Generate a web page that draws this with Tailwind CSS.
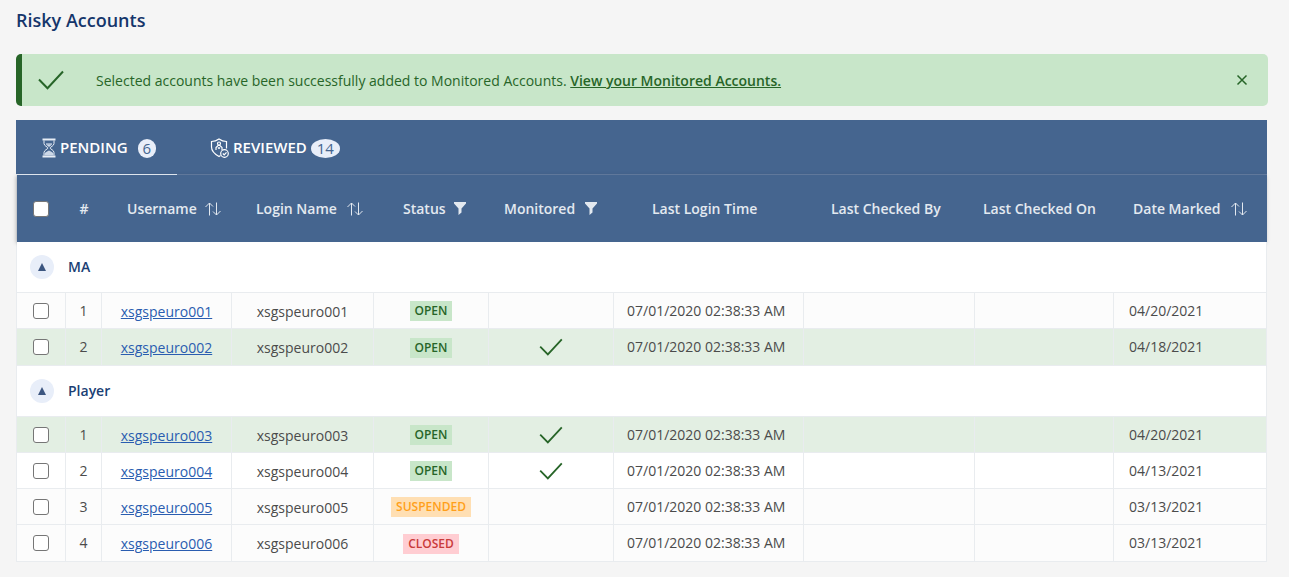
<!DOCTYPE html>
<html lang="en">
<head>
<meta charset="utf-8">
<meta name="viewport" content="width=device-width, initial-scale=1">
<title>Risky Accounts</title>
<script src="https://cdn.jsdelivr.net/npm/@tailwindcss/browser@4"></script>
</head>
<body class="bg-[#f5f5f5] font-['Segoe_UI','Open_Sans','Noto_Sans',sans-serif] text-sm text-[#4b4b4b]">
<svg class="hidden" aria-hidden="true">
  <symbol id="check" viewBox="0 0 26 20"><path d="M1 9.500L9.500 18.200L25 1.500" fill="none" stroke="currentColor" stroke-width="2"/></symbol>
  <symbol id="sort" viewBox="0 0 16 14"><path d="M4.500 13.500V1M.5 5L4.500 1L8 4.500M11.500 .5V13M8 9.500L11.500 13L15.500 9" fill="none" stroke="currentColor" stroke-width="1"/></symbol>
  <symbol id="filter" viewBox="0 0 12 13"><path d="M0 0H12V1.500L7.500 6.500V10.500L4.500 13V6.500L0 1.500Z" fill="currentColor"/></symbol>
</svg>
<main class="pl-4 pr-[21px] pt-2">
  <h1 class="text-lg leading-6 font-semibold text-[#15366b]">Risky Accounts</h1>

  <div role="status" class="mt-[22px] flex h-[52px] items-center rounded-[5px] border-l-6 border-[#276528] bg-[#c8e6c9] pl-4 pr-4 text-[#276528]">
    <svg class="h-5 w-[26px] shrink-0"><use href="#check"/></svg>
    <p class="ml-8 grow pt-0.5">Selected accounts have been successfully added to Monitored Accounts. <a href="#" class="font-semibold underline">View your Monitored Accounts.</a></p>
    <button type="button" aria-label="Close" class="p-1"><svg class="size-3" viewBox="0 0 12 12"><path d="M1.500 1.500L10.500 10.500M10.500 1.500L1.500 10.500" stroke="currentColor" stroke-width="1.500"/></svg></button>
  </div>

  <section class="mt-3.5 mr-px">
    <div role="tablist" class="flex h-[55px] border-b border-[#6780a5] bg-[#45658f] text-[15px] text-white">
      <button type="button" role="tab" aria-selected="true" class="-mb-px flex w-[161px] items-center border-b border-[#dde4ed] pt-0.5 pl-[26px] font-semibold">
        <svg class="h-5 w-3.5" viewBox="0 0 14 20" fill="none" stroke="#e8eef6"><path d="M.5 1.500H13.500M.5 18.500H13.500" stroke-width="2"/><path d="M2 2.500V5.500C2 8 6 9 6 10S2 12 2 14.500V17.500M12 2.500V5.500C12 8 8 9 8 10S12 12 12 14.500V17.500M4 6H10"/><path d="M2.500 17.500V16C3 14 5 13.500 7 12.500C9 13.500 11 14 11.500 16V17.500ZM4 6.500L7 9L10 6.500Z" fill="#cbd7e7" stroke="none"/></svg>
        <span class="ml-1">PENDING</span>
        <span class="ml-2.5 rounded-full bg-[#e8eef9] px-[5px] leading-[19px] font-normal text-[#45658f]">6</span>
      </button>
      <button type="button" role="tab" aria-selected="false" class="ml-[33px] flex items-center pt-0.5 font-semibold">
        <svg class="h-5 w-[19px]" viewBox="0 0 19 20" fill="none" stroke="#fff" stroke-width="1.200"><path d="M10.500 17.500L9 18.500C4.500 16 1.500 13 1.500 9V3.500C4.500 3.500 7 2.500 9 1C11 2.500 13.500 3.500 16.500 3.500V10.500"/><circle cx="9" cy="5.500" r="1.500"/><path d="M6 12V9.500L8 7.500H10L12 9.500V12M8 9.500L9 10.500L10 9.500"/><circle cx="14.500" cy="15.500" r="3.800"/><path d="M12.800 15.500L14.200 16.800L16.500 14.300"/></svg>
        <span class="ml-1">REVIEWED</span>
        <span class="ml-1 rounded-[50%] bg-[#e8eef9] px-1.5 leading-[19px] font-normal text-[#45658f]">14</span>
      </button>
    </div>

    <table class="w-full table-fixed border-separate border-spacing-0 border-l border-[#e9ecef]">
      <colgroup>
        <col class="w-[49px]"><col class="w-9"><col class="w-[130px]"><col class="w-[142px]"><col class="w-[115px]"><col class="w-[125px]"><col class="w-[190px]"><col class="w-[171px]"><col class="w-[139px]"><col class="w-[153px]">
      </colgroup>
      <thead class="bg-[#45658f] text-left whitespace-nowrap text-[#e3e9f0] shadow-[-1px_1px_4px_rgba(0,0,0,0.25)]">
        <tr class="h-[67px] *:font-semibold">
          <th scope="col" class="pr-px"><input type="checkbox" aria-label="Select all" class="mx-auto block size-4 appearance-none rounded-[3px] border border-[#767676] bg-white checked:bg-[#2a5db0]"></th>
          <th scope="col" class="text-center">#</th>
          <th scope="col" class="pl-[25px]"><button type="button" class="flex items-center gap-2">Username<svg class="h-3.5 w-4"><use href="#sort"/></svg></button></th>
          <th scope="col" class="pl-6"><button type="button" class="flex items-center gap-2.5">Login Name<svg class="h-3.5 w-4"><use href="#sort"/></svg></button></th>
          <th scope="col" class="pl-[29px]"><button type="button" class="flex items-center gap-2">Status<svg class="h-[13px] w-3"><use href="#filter"/></svg></button></th>
          <th scope="col" class="pl-[15px]"><button type="button" class="flex items-center gap-2.5">Monitored<svg class="h-[13px] w-3"><use href="#filter"/></svg></button></th>
          <th scope="col" class="pl-[38px]">Last Login Time</th>
          <th scope="col" class="pl-[27px]">Last Checked By</th>
          <th scope="col" class="pl-2">Last Checked On</th>
          <th scope="col" class="pl-[19px]"><button type="button" class="flex items-center gap-2.5">Date Marked<svg class="h-3.5 w-4"><use href="#sort"/></svg></button></th>
        </tr>
      </thead>

      <tbody class="*:*:border-r *:*:border-b *:*:border-[#e9ecef]">
        <tr class="h-[51px] bg-white"><th colspan="10" scope="rowgroup"><div class="flex items-center pl-[13px] font-semibold text-[#1b3f75]"><button type="button" aria-label="Collapse MA" class="mr-3.5 flex size-6 items-center justify-center rounded-full bg-[#e8eef9]"><svg class="size-2" viewBox="0 0 8 8"><path d="M4 0L8 8H0Z" fill="#3c5680"/></svg></button>MA</div></th></tr>
        <tr class="h-9 bg-[#fcfcfc]">
          <td><input type="checkbox" aria-label="Select xsgspeuro001" class="mx-auto block size-4 appearance-none rounded-[3px] border border-[#767676] bg-white checked:bg-[#2a5db0]"></td>
          <td class="text-center">1</td><td class="pt-0.5 text-center"><a href="#" class="text-[#2a5db0] underline">xsgspeuro001</a></td><td class="pt-0.5 text-center">xsgspeuro001</td>
          <td class="text-center"><span class="inline-block bg-[#c8e6c9] px-[5px] text-xs leading-5 font-semibold text-[#276528]">OPEN</span></td><td></td>
          <td class="pl-[13px]">07/01/2020 02:38:33 AM</td><td></td><td></td><td class="pl-[15px]">04/20/2021</td>
        </tr>
        <tr class="h-[37px] bg-[#e3efe3]">
          <td><input type="checkbox" aria-label="Select xsgspeuro002" class="mx-auto block size-4 appearance-none rounded-[3px] border border-[#767676] bg-white checked:bg-[#2a5db0]"></td>
          <td class="text-center">2</td><td class="pt-0.5 text-center"><a href="#" class="text-[#2a5db0] underline">xsgspeuro002</a></td><td class="pt-0.5 text-center">xsgspeuro002</td>
          <td class="text-center"><span class="inline-block bg-[#c8e6c9] px-[5px] text-xs leading-5 font-semibold text-[#276528]">OPEN</span></td><td><svg class="mx-auto h-[18px] w-6 text-[#276528]" role="img" aria-label="Monitored"><use href="#check"/></svg></td>
          <td class="pl-[13px]">07/01/2020 02:38:33 AM</td><td></td><td></td><td class="pl-[15px]">04/18/2021</td>
        </tr>
      </tbody>

      <tbody class="*:*:border-r *:*:border-b *:*:border-[#e9ecef]">
        <tr class="h-[51px] bg-white"><th colspan="10" scope="rowgroup"><div class="flex items-center pl-[13px] font-semibold text-[#1b3f75]"><button type="button" aria-label="Collapse Player" class="mr-3.5 flex size-6 items-center justify-center rounded-full bg-[#e8eef9]"><svg class="size-2" viewBox="0 0 8 8"><path d="M4 0L8 8H0Z" fill="#3c5680"/></svg></button>Player</div></th></tr>
        <tr class="h-9 bg-[#e3efe3]">
          <td><input type="checkbox" aria-label="Select xsgspeuro003" class="mx-auto block size-4 appearance-none rounded-[3px] border border-[#767676] bg-white checked:bg-[#2a5db0]"></td>
          <td class="text-center">1</td><td class="pt-0.5 text-center"><a href="#" class="text-[#2a5db0] underline">xsgspeuro003</a></td><td class="pt-0.5 text-center">xsgspeuro003</td>
          <td class="text-center"><span class="inline-block bg-[#c8e6c9] px-[5px] text-xs leading-5 font-semibold text-[#276528]">OPEN</span></td><td><svg class="mx-auto h-[18px] w-6 text-[#276528]" role="img" aria-label="Monitored"><use href="#check"/></svg></td>
          <td class="pl-[13px]">07/01/2020 02:38:33 AM</td><td></td><td></td><td class="pl-[15px]">04/20/2021</td>
        </tr>
        <tr class="h-9 bg-white">
          <td><input type="checkbox" aria-label="Select xsgspeuro004" class="mx-auto block size-4 appearance-none rounded-[3px] border border-[#767676] bg-white checked:bg-[#2a5db0]"></td>
          <td class="text-center">2</td><td class="pt-0.5 text-center"><a href="#" class="text-[#2a5db0] underline">xsgspeuro004</a></td><td class="pt-0.5 text-center">xsgspeuro004</td>
          <td class="text-center"><span class="inline-block bg-[#c8e6c9] px-[5px] text-xs leading-5 font-semibold text-[#276528]">OPEN</span></td><td><svg class="mx-auto h-[18px] w-6 text-[#276528]" role="img" aria-label="Monitored"><use href="#check"/></svg></td>
          <td class="pl-[13px]">07/01/2020 02:38:33 AM</td><td></td><td></td><td class="pl-[15px]">04/13/2021</td>
        </tr>
        <tr class="h-9 bg-[#fcfcfc]">
          <td><input type="checkbox" aria-label="Select xsgspeuro005" class="mx-auto block size-4 appearance-none rounded-[3px] border border-[#767676] bg-white checked:bg-[#2a5db0]"></td>
          <td class="text-center">3</td><td class="pt-0.5 text-center"><a href="#" class="text-[#2a5db0] underline">xsgspeuro005</a></td><td class="pt-0.5 text-center">xsgspeuro005</td>
          <td class="text-center"><span class="inline-block bg-[#ffdfb3] px-[5px] text-xs leading-5 font-semibold text-[#ff9f1a]">SUSPENDED</span></td><td></td>
          <td class="pl-[13px]">07/01/2020 02:38:33 AM</td><td></td><td></td><td class="pl-[15px]">03/13/2021</td>
        </tr>
        <tr class="h-[37px] bg-[#fcfcfc]">
          <td><input type="checkbox" aria-label="Select xsgspeuro006" class="mx-auto block size-4 appearance-none rounded-[3px] border border-[#767676] bg-white checked:bg-[#2a5db0]"></td>
          <td class="text-center">4</td><td class="pt-0.5 text-center"><a href="#" class="text-[#2a5db0] underline">xsgspeuro006</a></td><td class="pt-0.5 text-center">xsgspeuro006</td>
          <td class="text-center"><span class="inline-block bg-[#ffcdd2] px-[5px] text-xs leading-5 font-semibold text-[#c93a3a]">CLOSED</span></td><td></td>
          <td class="pl-[13px]">07/01/2020 02:38:33 AM</td><td></td><td></td><td class="pl-[15px]">03/13/2021</td>
        </tr>
      </tbody>
    </table>
  </section>
</main>
</body>
</html>
